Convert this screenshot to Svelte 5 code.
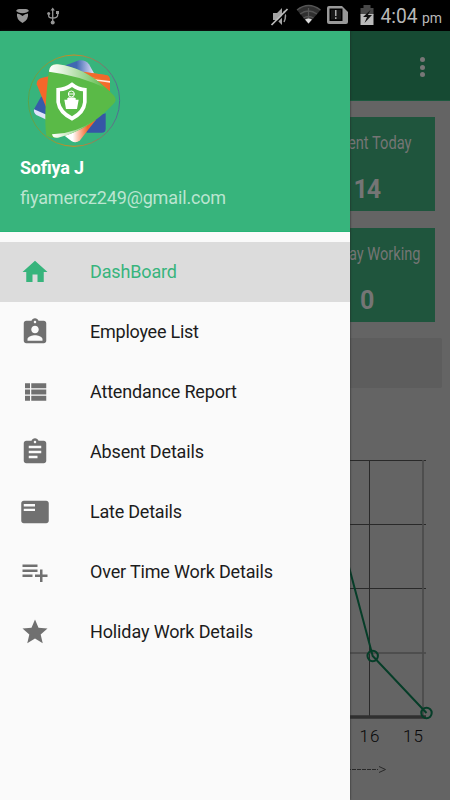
<script>
  const items = [
    { icon: 'home', label: 'DashBoard', w: 87 },
    { icon: 'badge', label: 'Employee List', w: 109 },
    { icon: 'list', label: 'Attendance Report', w: 147 },
    { icon: 'assignment', label: 'Absent Details', w: 114 },
    { icon: 'card', label: 'Late Details', w: 92 },
    { icon: 'add', label: 'Over Time Work Details', w: 183 },
    { icon: 'star', label: 'Holiday Work Details', w: 163 }
  ];
  const paths = {
    home: 'M10 20v-6h4v6h5v-8h3L12 3 2 12h3v8z',
    badge: 'M19 3h-4.180C14.400 1.840 13.300 1 12 1c-1.300 0-2.400.840-2.820 2H5c-1.100 0-2 .900-2 2v14c0 1.100.900 2 2 2h14c1.100 0 2-.900 2-2V5c0-1.100-.900-2-2-2zm-7 0c.550 0 1 .450 1 1s-.450 1-1 1-1-.450-1-1 .450-1 1-1zm0 4c1.660 0 3 1.340 3 3s-1.340 3-3 3-3-1.340-3-3 1.340-3 3-3zm6 12H6v-1.400c0-2 4-3.100 6-3.100s6 1.100 6 3.100V19z',
    list: 'M4 14h4v-4H4v4zm0 5h4v-4H4v4zM4 9h4V5H4v4zm5 5h12v-4H9v4zm0 5h12v-4H9v4zM9 5v4h12V5H9z',
    assignment: 'M19 3h-4.180C14.400 1.840 13.300 1 12 1c-1.300 0-2.400.840-2.820 2H5c-1.100 0-2 .900-2 2v14c0 1.100.900 2 2 2h14c1.100 0 2-.900 2-2V5c0-1.100-.900-2-2-2zm-7 0c.550 0 1 .450 1 1s-.450 1-1 1-1-.450-1-1 .450-1 1-1zm2 14H7v-2h7v2zm3-4H7v-2h10v2zm0-4H7V7h10v2z',
    card: 'M21 3H3c-1.100 0-2 .9-2 2v14c0 1.100.9 2 2 2h18c1.100 0 2-.9 2-2V5c0-1.100-.9-2-2-2zm-9 8.250H3v-1.900h9v1.900zm0-3.700H3V5.650h9v1.900z',
    add: 'M14 10H2v2h12v-2zm0-4H2v2h12V6zm4 8v-4h-2v4h-4v2h4v4h2v-4h4v-2h-4zM2 16h8v-2H2v2z',
    star: 'M12 17.270L18.180 21l-1.640-7.030L22 9.240l-7.190-.610L12 2 9.190 8.630 2 9.240l5.460 4.730L5.820 21z'
  };
</script>

<div class="screen">
  <header class="status">
    <svg width="450" height="31" viewBox="0 0 450 31">
      <g fill="#969696">
        <path d="M16 11q1-2 3-2h7q2 0 3 2l-2.500 1.500q-4 1.500-8 0z" />
        <path d="M17 13.500q3 0 5.500 2.500 2.500-2.500 5.500-2.500 1 6-5.500 9.500-6.500-3.500-5.500-9.500z" />
        <circle cx="52.700" cy="22.500" r="2" /><path d="m50.500 10.500 2.200-3 2.200 3z" />
        <circle cx="48.700" cy="13.500" r="1.500" /><path d="M56 11h3v3h-3z" />
      </g>
      <path d="M52.700 9v13M48.700 14v2q0 2 4 2 5 0 5-3v-2" fill="none" stroke="#969696" stroke-width="1.300" />
      <path d="M273 13h4l5-5v17l-5-5h-4z" fill="#a4a4a4" />
      <path d="M284 11q3 5 0 11" fill="none" stroke="#999" stroke-width="1.500" />
      <path d="m272.700 26 16-16" stroke="#000" stroke-width="1.500" />
      <path d="m271.500 25 16-16" stroke="#bbb" stroke-width="1.700" />
      <path d="M297 10q11.500-9 23.500 0L308.500 24z" fill="#303030" />
      <path d="M297 10q11.500-9 23.500 0M300 14q8.500-6 17 0M303.500 18q5-3 10 0M308.500 8v11" fill="none" stroke="#555" stroke-width="1.300" />
      <path d="m305 19.500 3.500 4 3.500-4q-3.500-2-7 0z" fill="#ddd" />
      <path d="M329 6h13l6 6v10q0 2-2 2h-17q-2 0-2-2V8q0-2 2-2z" fill="#999" />
      <path d="M329.500 8.500h13V21h-13z" fill="#000" /><path d="M331 10h10v9.500h-10z" fill="#181818" /><path d="M335 10h1.500v6H335zm0 7.300h1.500V19H335z" fill="#aaa" />
      <path d="M360.500 8h3V5h7v3h3v7h-13z" fill="#484848" /><path d="M360.500 14h13v11h-13z" fill="#bbb" />
      <path d="m370.500 10-7.500 7h4l-2.500 6 7.500-8h-4z" fill="#111" />
      <text x="380.500" y="23" font-size="20.500" fill="#b8b8b8" textLength="37" lengthAdjust="spacingAndGlyphs">4:04</text>
      <text x="422" y="23" font-size="14" fill="#b8b8b8" textLength="20" lengthAdjust="spacingAndGlyphs">pm</text>
    </svg>
  </header>

  <main class="content">
    <div class="appbar"><i></i><i></i><i></i></div>
    <div class="cards">
      <section class="stat">
        <svg width="210" height="94">
          <text x="123" y="32" font-size="18" textLength="63.500" lengthAdjust="spacingAndGlyphs">ent Today</text>
          <text x="128.500" y="81" font-size="25" font-weight="700" textLength="27.500">14</text>
        </svg>
      </section>
      <section class="stat">
        <svg width="210" height="94">
          <text x="124" y="32" font-size="18" textLength="71.500" lengthAdjust="spacingAndGlyphs">ay Working</text>
          <text x="135" y="81" font-size="25" font-weight="700">0</text>
        </svg>
      </section>
    </div>
    <div class="band"></div>
    <svg class="chart" width="450" height="412" viewBox="0 388 450 412">
      <path d="M40 460.500h386M40 524.500h386M40 588.500h386" stroke="#292929" />
      <path d="M369.500 460v256" stroke="#292929" />
      <path d="M40 653h386" stroke="#474747" stroke-width="1.300" /><path d="M423 460v256" stroke="#4b4b4b" stroke-width="1.700" />
      <path d="M40 717h386" stroke="#303030" stroke-width="3.500" />
      <path d="M349 567 372.700 656 426.500 713" fill="none" stroke="#063d28" stroke-width="2" />
      <g fill="none" stroke="#063d28" stroke-width="2"><circle cx="372.700" cy="656" r="5.200" /><circle cx="426.500" cy="713" r="5.200" /></g>
      <g fill="#080808" font-size="17" font-weight="300"><text x="359.500" y="742" textLength="20">16</text><text x="403" y="742" textLength="20">15</text></g>
      <path d="M347 769.500h31" stroke="#292929" stroke-dasharray="4 1" /><path d="m379 766.500 6.500 3-6.500 3" fill="none" stroke="#292929" />
    </svg>
  </main>

  <aside class="drawer">
    <div class="profile">
      <svg class="logo" width="100" height="100" viewBox="15 15 300 300">
        <defs>
          <linearGradient id="ring"><stop stop-color="#5aa348" /><stop offset=".5" stop-color="#d08a24" /><stop offset="1" stop-color="#4b6d97" /></linearGradient>
          <linearGradient id="top"><stop stop-color="#fff" /><stop offset=".2" stop-color="#e7f4e2" /><stop offset="1" stop-color="#5aba47" /></linearGradient>
          <linearGradient id="blue"><stop stop-color="#3f68b2" /><stop offset=".45" stop-color="#3f68b2" /><stop offset="1" stop-color="#eee9ff" /></linearGradient>
          <linearGradient id="orange"><stop stop-color="#fff" /><stop offset=".65" stop-color="#f4772f" /><stop offset="1" stop-color="#f4672a" /></linearGradient>
          <linearGradient id="tail" x1="0" y1="0" x2="1" y2="0"><stop stop-color="#fff" /><stop offset=".3" stop-color="#fff" /><stop offset=".75" stop-color="#f4672a" /></linearGradient>
        </defs>
        <circle cx="162" cy="167" r="137" fill="none" stroke="url(#ring)" stroke-width="3" />
        <path d="M125 65 177 46q20-2 30 12l18 32-30 25z" fill="url(#blue)" />
        <path d="M63 155 42 193q-4 12 8 16l34 16V155z" fill="#365ca9" />
        <path d="m42 193 41 18v15l-34-16q-9-6-7-17z" fill="#dfe4fb" />
        <path d="M50 118q0-15 14-19l25-6v120z" fill="#f4672a" />
        <path d="m145 75 112 15q12 2 13 15v33l-80-10z" fill="url(#orange)" />
        <path d="m190 80 67 10q12 2 13 15l-3 4q-25-12-77-17z" fill="#f06a2c" />
        <path d="m218 102 52 6v5q-25-3-52-7z" fill="#ffe9dc" />
        <path d="M190 225 257 205v46q0 12-12 12h-45z" fill="#3656a6" />
        <path d="m128 268 26 20q14 8 26-2l48-62-35 6z" fill="url(#tail)" />
        <path d="M87 75q4-20 27-17 88 12 166 92 14 14 0 27-72 78-166 101-18 3-35-6-9-60 8-197z" fill="#5aba47" />
        <path d="M87 78q3-23 27-20 78 9 143 72-75-38-170-50z" fill="url(#top)" />
        <path d="M96 268q68 0 134-46-61 44-116 56-15 3-18-10z" fill="url(#top)" />
        <path d="M156 112q22 18 44 17v43q-3 36-44 55-42-19-47-55v-43q24 1 47-17z" fill="#fff" />
        <path d="M156 126q16 12 33 13v33q-3 26-33 42-31-16-36-42v-33q20-1 36-13z" fill="#5aba47" />
        <circle cx="154" cy="147" r="9" fill="none" stroke="#fff" stroke-width="3" /><path d="M145 147h18M144 159h20" stroke="#fff" stroke-width="3" />
        <path d="M142 159h25v5h9l-5 28h-33l-5-28h9z" fill="#fff" />
      </svg>
      <svg class="identity" width="240" height="60">
        <text x="0" y="22.500" fill="#fff" font-size="18" font-weight="700" textLength="64">Sofiya J</text>
        <text x="0" y="53" fill="#bbe5d1" font-size="18" textLength="206">fiyamercz249@gmail.com</text>
      </svg>
    </div>
    <nav>
      {#each items as item, i}
        <a href="#top" class:active={i === 0}>
          <svg class="icon" viewBox="0 0 24 24"><path d={paths[item.icon]} /></svg>
          <svg class="label" width="220" height="30"><text x="0" y="21" font-size="18" textLength={item.w}>{item.label}</text></svg>
        </a>
      {/each}
    </nav>
  </aside>
</div>

<style>
  .screen { position: relative; width: 450px; height: 800px; overflow: hidden; background: #646464; font-family: Roboto, sans-serif; }
  svg { display: block; flex: none; }
  .status { height: 31px; background: #000; }
  .appbar { box-sizing: border-box; height: 70px; padding: 26px 25px 0 0; display: flex; flex-direction: column; align-items: flex-end; gap: 2.500px; background: #164a33; border-bottom: 1px solid #1c583e; }
  .appbar i { width: 5px; height: 5px; border-radius: 50%; background: #777; }
  .cards { display: flex; flex-direction: column; align-items: flex-end; gap: 17.400px; padding: 16px 15px 0 0; }
  .stat { width: 210px; height: 94px; background: #1f553d; fill: #757575; }
  .band { height: 50px; margin: 15.600px 8px 0; border-radius: 2px; background: #5d5d5d; }
  .drawer { position: absolute; left: 0; top: 31px; width: 350px; height: 769px; background: #fafafa; box-shadow: 0 0 2px #222; }
  .profile { box-sizing: border-box; height: 201px; padding: 19px 0 0 20px; background: #37b47c; border-bottom: 1px solid #27b577; }
  .logo { margin-left: 5px; }
  .identity { margin-top: 1px; }
  nav { padding-top: 10px; }
  a { display: flex; align-items: center; box-sizing: border-box; height: 60px; padding: 0 0 0 20px; color: #1c1c1c; fill: currentColor; text-decoration: none; }
  a.active { color: #37b47c; background: #dcdcdc; }
  .icon { width: 30px; height: 30px; fill: #707070; }
  .active .icon { fill: #37b47c; }
  .label { margin-left: 40px; }
</style>
